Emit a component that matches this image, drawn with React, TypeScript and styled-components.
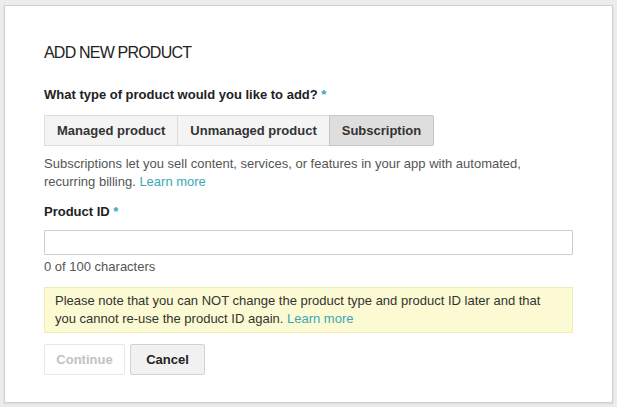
import { useState } from "react";
import styled, { createGlobalStyle } from "styled-components";

const GlobalStyle = createGlobalStyle`
  html, body {
    margin: 0;
    padding: 0;
    background: #ececec;
    font-family: "Liberation Sans", Arial, Helvetica, sans-serif;
  }
`;

const types = ["Managed product", "Unmanaged product", "Subscription"];

const App: React.FC = () => {
  const [type, setType] = useState<string>("Subscription");
  const [productId, setProductId] = useState<string>("");

  return (
    <Page>
      <GlobalStyle />
      <Dialog>
        <Title>ADD NEW PRODUCT</Title>
        <Label>
          What type of product would you like to add? <Required>*</Required>
        </Label>
        <Segments>
          {types.map((t) => (
            <Segment key={t} active={t === type} onClick={() => setType(t)}>
              {t}
            </Segment>
          ))}
        </Segments>
        <Description>
          Subscriptions let you sell content, services, or features in your app with automated,
          recurring billing. <Link>Learn more</Link>
        </Description>
        <FieldLabel>
          Product ID <Required>*</Required>
        </FieldLabel>
        <Input
          type="text"
          value={productId}
          maxLength={100}
          onChange={(e) => setProductId(e.target.value)}
        />
        <Counter>{productId.length} of 100 characters</Counter>
        <Notice>
          Please note that you can NOT change the product type and product ID later and that
          you cannot re-use the product ID again. <Link>Learn more</Link>
        </Notice>
        <Actions>
          <Button width="81px" disabled={!productId}>
            Continue
          </Button>
          <Button width="75px">Cancel</Button>
        </Actions>
      </Dialog>
    </Page>
  );
};

export default App;

const Page = styled.div`
  padding: 5px 4px;
  height: 407px;
  box-sizing: border-box;
`;

const Dialog = styled.div`
  width: 609px;
  height: 398px;
  box-sizing: border-box;
  background: #fff;
  border: 1px solid #cfcfcf;
  box-shadow: 0 1px 2px rgba(0, 0, 0, 0.08);
  padding: 37px 39px 0;
  color: #333;
  font-size: 13px;
  line-height: 18px;
`;

const Title = styled.h1`
  margin: 0;
  font-size: 16px;
  line-height: 20px;
  font-weight: normal;
  color: #222;
  letter-spacing: -0.8px;
`;

const Label = styled.div`
  margin-top: 23px;
  font-weight: bold;
  color: #222;
`;

const Required = styled.span`
  color: #3aa7b7;
`;

const Segments = styled.div`
  display: flex;
  margin-top: 11px;
`;

interface SegmentProps {
  active?: boolean;
}

const Segment = styled.button<SegmentProps>`
  height: 31px;
  padding: 0 12px;
  font-family: inherit;
  font-size: 13px;
  font-weight: bold;
  color: #333;
  background: ${(props) => (props.active ? "#dedede" : "#f4f4f4")};
  border: 1px solid ${(props) => (props.active ? "#c6c6c6" : "#dcdcdc")};
  border-radius: 0;
  margin-left: -1px;
  position: relative;
  z-index: ${(props) => (props.active ? 1 : 0)};
  cursor: pointer;
  &:first-child {
    margin-left: 0;
  }
  &:last-child {
    border-radius: 0 2px 2px 0;
  }
`;

const Description = styled.p`
  margin: 9px 0 0;
  color: #555;
`;

const Link = styled.a`
  color: #3aa7b7;
  cursor: pointer;
`;

const FieldLabel = styled.div`
  margin-top: 12px;
  font-weight: bold;
  color: #222;
`;

const Input = styled.input`
  display: block;
  width: 100%;
  height: 25px;
  box-sizing: border-box;
  margin-top: 9px;
  padding: 2px 6px;
  font-family: inherit;
  font-size: 13px;
  border: 1px solid #cdcdcd;
  border-radius: 1px;
  &:focus {
    outline: 1px solid #3aa7b7;
  }
`;

const Counter = styled.div`
  margin-top: 3px;
  color: #555;
`;

const Notice = styled.div`
  margin-top: 11px;
  padding: 4px 10px;
  background: #fcfad2;
  border: 1px solid #f1ebb4;
  color: #333;
`;

const Actions = styled.div`
  display: flex;
  gap: 5px;
  margin-top: 11px;
`;

interface ButtonProps {
  width?: string;
}

const Button = styled.button<ButtonProps>`
  width: ${(props) => props.width || "auto"};
  height: 31px;
  padding: 0;
  font-family: inherit;
  font-size: 13px;
  font-weight: bold;
  color: #222;
  background: #f1f1f1;
  border: 1px solid #d2d2d2;
  border-radius: 2px;
  cursor: pointer;
  &:disabled {
    color: #c2c2c2;
    background: #fff;
    border-color: #e8e8e8;
    cursor: default;
  }
`;
